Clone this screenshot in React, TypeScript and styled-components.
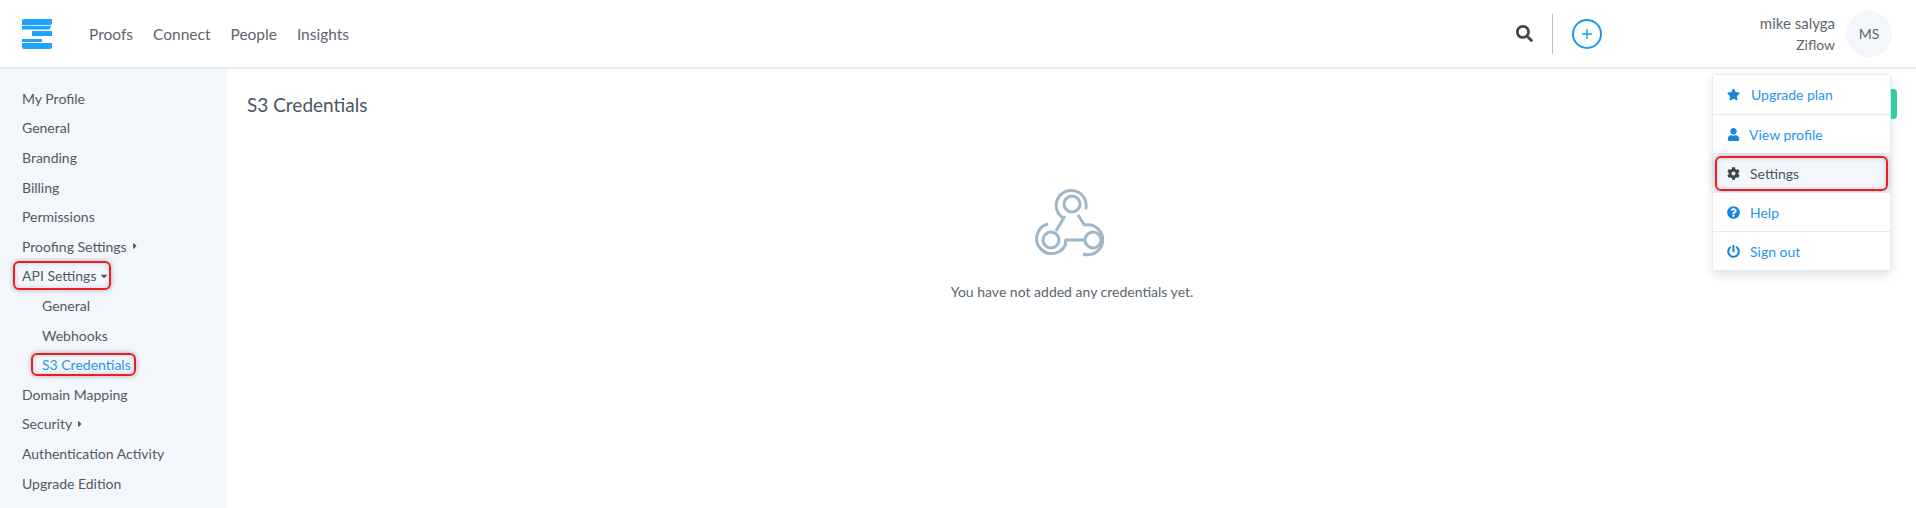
import React from "react";
import styled, { createGlobalStyle } from "styled-components";
import { FaStar, FaUser, FaCog, FaQuestionCircle, FaPowerOff, FaSearch, FaCaretRight, FaCaretDown } from "react-icons/fa";

const Global = createGlobalStyle`
  html, body { margin: 0; padding: 0; background: #fff; }
  body { font-family: "Lato", "Liberation Sans", sans-serif; color: #4a5560; overflow: hidden; }
`;

const Page = styled.div`
  width: 1916px;
  height: 508px;
  display: flex;
  flex-direction: column;
  position: relative;
  overflow: hidden;
`;

const Header = styled.header`
  height: 67px;
  flex: none;
  display: flex;
  align-items: center;
  padding: 0 24px 0 22px;
  border-bottom: 2px solid #e3ebf3;
`;

const Logo = styled.svg`
  width: 30px;
  height: 30px;
  flex: none;
  margin-right: 37px;
`;

const Nav = styled.nav`
  display: flex;
  gap: 20px;
  flex: 1;
`;

const NavLink = styled.span`
  font-size: 15.5px;
  color: #5b6670;
`;

const SearchButton = styled.span`
  display: flex;
  color: #3c444b;
  font-size: 17px;
`;

const Divider = styled.span`
  width: 1px;
  height: 40px;
  background: #b4c5d3;
  margin: 0 19px;
`;

const PlusCircle = styled.span`
  width: 30px;
  height: 30px;
  box-sizing: border-box;
  border: 2px solid #1f96ee;
  border-radius: 50%;
  display: flex;
  align-items: center;
  justify-content: center;
  color: #1f96ee;
  margin-right: 158px;
`;

const UserBlock = styled.div`
  display: flex;
  flex-direction: column;
  align-items: flex-end;
  gap: 4px;
  margin-right: 11px;
  color: #5b6670;
`;

const UserName = styled.span`
  font-size: 15px;
  line-height: 17px;
`;

const UserOrg = styled.span`
  font-size: 14px;
  line-height: 17px;
`;

const Avatar = styled.div`
  width: 46px;
  height: 46px;
  border-radius: 50%;
  background: #f3f6fa;
  display: flex;
  align-items: center;
  justify-content: center;
  font-size: 14px;
  color: #5b6670;
`;

const Body = styled.div`
  flex: 1;
  display: flex;
  min-height: 0;
`;

const Sidebar = styled.aside`
  width: 227px;
  flex: none;
  background: #f3f6fa;
  padding-top: 14.6px;
  box-sizing: border-box;
`;

const SideItem = styled.div<{ $sub?: boolean; $active?: boolean }>`
  height: 29.6px;
  display: flex;
  align-items: center;
  gap: 3px;
  padding-left: ${(p) => (p.$sub ? 42 : 22)}px;
  font-size: 14px;
  color: ${(p) => (p.$active ? "#1f96ee" : "#4f5a66")};
`;

const Marked = styled.span`
  position: relative;
  display: inline-flex;
  align-items: center;
  gap: 3px;
`;

const RedBox = styled.span<{ $l: number; $r: number; $t: number; $b: number }>`
  position: absolute;
  left: ${(p) => p.$l}px;
  right: ${(p) => p.$r}px;
  top: ${(p) => p.$t}px;
  bottom: ${(p) => p.$b}px;
  border: 2px solid #ee1c25;
  border-radius: 6px;
  box-shadow: 0 0 5px rgba(60, 70, 80, 0.4), inset 0 0 5px rgba(60, 70, 80, 0.22);
`;

const Content = styled.main`
  flex: 1;
  display: flex;
  flex-direction: column;
  align-items: center;
  padding: 0 19px 0 20px;
  min-width: 0;
`;

const TitleRow = styled.div`
  align-self: stretch;
  display: flex;
  align-items: center;
  justify-content: space-between;
  height: 30px;
  margin-top: 20px;
`;

const Title = styled.h1`
  margin: 0;
  font-size: 19px;
  font-weight: 400;
  color: #4a5560;
`;

const GreenButton = styled.div`
  width: 110px;
  height: 30px;
  border-radius: 4px;
  background: #2fd3a8;
`;

const EmptyIcon = styled.svg`
  width: 76px;
  height: 72px;
  margin-top: 69px;
`;

const EmptyText = styled.p`
  margin: 23px 0 0;
  font-size: 14px;
  color: #5b6670;
`;

const Menu = styled.div`
  position: absolute;
  left: 1712px;
  top: 74px;
  width: 179px;
  box-sizing: border-box;
  background: #fff;
  border: 1px solid #e3ebf3;
  border-radius: 4px;
  box-shadow: 0 4px 10px rgba(90, 110, 130, 0.2);
`;

const MenuItem = styled.div<{ $active?: boolean; $gap?: number }>`
  position: relative;
  height: 39px;
  box-sizing: border-box;
  display: flex;
  align-items: center;
  padding-left: 14px;
  font-size: 14px;
  gap: ${(p) => p.$gap ?? 11}px;
  color: ${(p) => (p.$active ? "#4a5560" : "#1f96ee")};
  background: ${(p) => (p.$active ? "#f3f6fa" : "#fff")};
  & + & { border-top: 1px solid #e3ebf3; }
  svg { width: 13px; height: 13px; flex: none; color: ${(p) => (p.$active ? "#3c444b" : "#1585dc")}; }
`;

const sideTop = ["My Profile", "General", "Branding", "Billing", "Permissions"];
const sideBottom = ["Domain Mapping"];

export default function App() {
  return (
    <Page>
      <Global />
      <Header>
        <Logo viewBox="0 0 30 30" aria-label="Ziflow">
          <path d="M0 2a2 2 0 0 1 2-2h28v4a2 2 0 0 1-2 2H0z" fill="#1ea2fb" />
          <path d="M0 6.8h29.2c-.4 1.6-1 3-2.2 3.8H0z" fill="#1ea2fb" />
          <rect x="10" y="12" width="20" height="5" fill="#1ea2fb" />
          <rect x="10" y="17.6" width="10" height="0" fill="#1ea2fb" />
          <path d="M0 20h20v3H0z" fill="#1ea2fb" />
          <path d="M0 24h30v4a2 2 0 0 1-2 2H2a2 2 0 0 1-2-2z" fill="#1ea2fb" />
        </Logo>
        <Nav>
          <NavLink>Proofs</NavLink>
          <NavLink>Connect</NavLink>
          <NavLink>People</NavLink>
          <NavLink>Insights</NavLink>
        </Nav>
        <SearchButton><FaSearch /></SearchButton>
        <Divider />
        <PlusCircle>
          <svg width="14" height="14" viewBox="0 0 14 14"><path d="M7 2v10M2 7h10" stroke="currentColor" strokeWidth="1.4" /></svg>
        </PlusCircle>
        <UserBlock>
          <UserName>mike salyga</UserName>
          <UserOrg>Ziflow</UserOrg>
        </UserBlock>
        <Avatar>MS</Avatar>
      </Header>
      <Body>
        <Sidebar>
          {sideTop.map((t) => <SideItem key={t}>{t}</SideItem>)}
          <SideItem>Proofing Settings <FaCaretRight size={10} /></SideItem>
          <SideItem>
            <Marked>API Settings <FaCaretDown size={10} /><RedBox $l={-9} $r={-2} $t={-6} $b={-6} /></Marked>
          </SideItem>
          <SideItem $sub>General</SideItem>
          <SideItem $sub>Webhooks</SideItem>
          <SideItem $sub $active>
            <Marked>S3 Credentials<RedBox $l={-11} $r={-5} $t={-3} $b={-3} /></Marked>
          </SideItem>
          {sideBottom.map((t) => <SideItem key={t}>{t}</SideItem>)}
          <SideItem>Security <FaCaretRight size={10} /></SideItem>
          <SideItem>Authentication Activity</SideItem>
          <SideItem>Upgrade Edition</SideItem>
        </Sidebar>
        <Content>
          <TitleRow>
            <Title>S3 Credentials</Title>
            <GreenButton />
          </TitleRow>
          <EmptyIcon viewBox="0 0 76 72" fill="none" stroke="#9fb7c8" strokeWidth="3">
            <circle cx="38" cy="16" r="8" />
            <path d="M52 20 A15 15 0 1 0 29 30" strokeLinecap="round" />
            <circle cx="17" cy="52" r="8" />
            <path d="M14 36 A15 15 0 1 0 32 55" />
            <circle cx="59" cy="52" r="8" />
            <path d="M49 66 A15 15 0 1 0 51 37" />
            <path d="M31 28 L22 43 M44 27 L51 38 M31 55 L32 52 H50" />
          </EmptyIcon>
          <EmptyText>You have not added any credentials yet.</EmptyText>
        </Content>
      </Body>
      <Menu>
        <MenuItem $gap={11}><FaStar />Upgrade plan</MenuItem>
        <MenuItem $gap={9}><FaUser />View profile</MenuItem>
        <MenuItem $active $gap={10}><FaCog />Settings<RedBox $l={2} $r={2} $t={2} $b={1} /></MenuItem>
        <MenuItem $gap={10}><FaQuestionCircle />Help</MenuItem>
        <MenuItem $gap={10}><FaPowerOff />Sign out</MenuItem>
      </Menu>
    </Page>
  );
}
